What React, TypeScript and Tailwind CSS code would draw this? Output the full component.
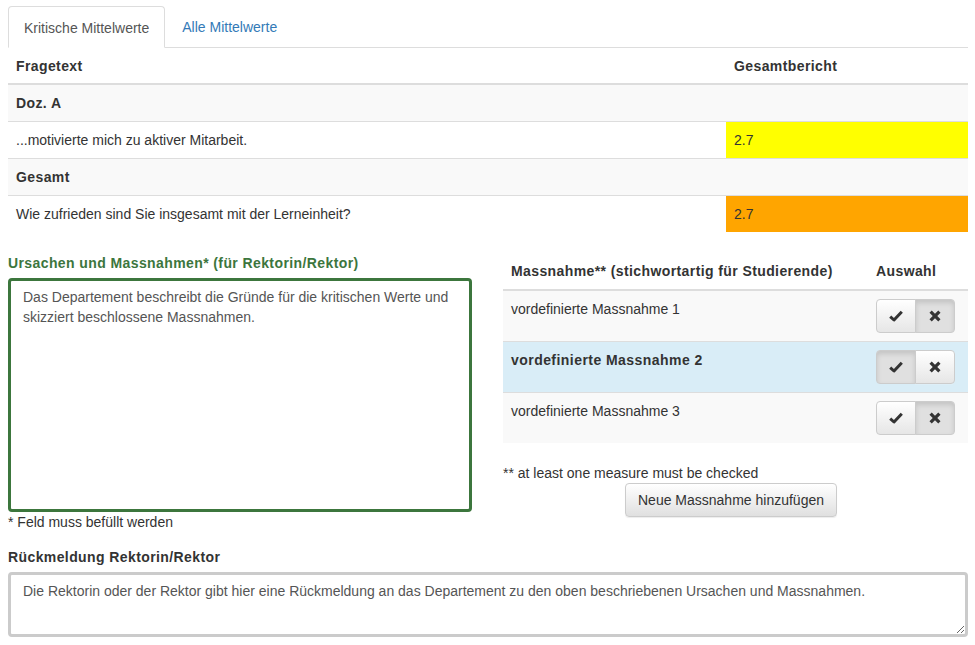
import React from 'react';

const rows = [
  { label: 'vordefinierte Massnahme 1', selected: false },
  { label: 'vordefinierte Massnahme 2', selected: true },
  { label: 'vordefinierte Massnahme 3', selected: false },
];

const CheckIcon = () => (
  <svg width="14" height="12" viewBox="0 0 14 12">
    <path d="M1.2 6.6 L5 10 L12.8 1.8" fill="none" stroke="#333" strokeWidth="3" strokeLinejoin="round" />
  </svg>
);

const RemoveIcon = () => (
  <svg width="12" height="12" viewBox="0 0 12 12">
    <path d="M1.6 1.6 L10.4 10.4 M10.4 1.6 L1.6 10.4" fill="none" stroke="#333" strokeWidth="3.2" />
  </svg>
);

const ToggleGroup: React.FC<{ on: boolean }> = ({ on }) => {
  const up = 'bg-gradient-to-b from-white to-[#e6e6e6] shadow-[0_1px_0_rgba(255,255,255,0.15)]';
  const down = 'bg-[#e0e0e0] shadow-[inset_0_3px_5px_rgba(0,0,0,0.125)]';
  return (
    <div className="flex">
      <button className={`w-[40px] h-[34px] flex items-center justify-center border border-[#ccc] rounded-l-[4px] ${on ? down : up}`}>
        <CheckIcon />
      </button>
      <button className={`w-[40px] h-[34px] -ml-px flex items-center justify-center border border-[#ccc] rounded-r-[4px] ${on ? up : down}`}>
        <RemoveIcon />
      </button>
    </div>
  );
};

export default function App() {
  return (
    <div className="min-h-screen bg-white pl-2 pr-[7px] pt-[6px] text-[14px] leading-[20px] text-[#333]" style={{ fontFamily: '"Liberation Sans", Arial, sans-serif' }}>
      {/* Tabs */}
      <div className="flex border-b border-[#ddd]">
        <div className="-mb-px px-[15px] pt-[11px] pb-[9px] bg-white border border-[#ddd] border-b-transparent rounded-t-[4px] text-[#555]">
          Kritische Mittelwerte
        </div>
        <div className="ml-[2px] px-[15px] pt-[11px] pb-[9px] text-[#337ab7]">Alle Mittelwerte</div>
      </div>

      {/* Results table */}
      <table className="w-full border-collapse mb-[21px]">
        <thead>
          <tr className="border-b-2 border-[#ddd]">
            <th className="px-2 pt-2 pb-[7px] text-left font-bold tracking-[0.4px]">Fragetext</th>
            <th className="px-2 pt-2 pb-[7px] text-left font-bold tracking-[0.4px] w-[242px]">Gesamtbericht</th>
          </tr>
        </thead>
        <tbody>
          <tr className="bg-[#f9f9f9] border-t border-[#ddd]">
            <td className="p-2 font-bold tracking-[0.4px]" colSpan={2}>Doz. A</td>
          </tr>
          <tr className="border-t border-[#ddd]">
            <td className="p-2">...motivierte mich zu aktiver Mitarbeit.</td>
            <td className="p-2 bg-[#ffff00]">2.7</td>
          </tr>
          <tr className="bg-[#f9f9f9] border-t border-[#ddd]">
            <td className="p-2 font-bold tracking-[0.4px]" colSpan={2}>Gesamt</td>
          </tr>
          <tr className="border-t border-[#ddd]">
            <td className="p-2">Wie zufrieden sind Sie insgesamt mit der Lerneinheit?</td>
            <td className="p-2 bg-[#ffa500]">2.7</td>
          </tr>
        </tbody>
      </table>

      <div className="grid grid-cols-[464px_1fr] gap-[31px]">
        {/* Left: Ursachen */}
        <div>
          <label className="block mb-[5px] font-bold tracking-[0.4px] text-[#3c763d]">Ursachen und Massnahmen* (für Rektorin/Rektor)</label>
          <textarea
            className="block w-full h-[234px] resize-none border-[3px] border-[#3c763d] rounded-[4px] px-[12px] py-[6px] text-[#555] outline-none"
            defaultValue="Das Departement beschreibt die Gründe für die kritischen Werte und skizziert beschlossene Massnahmen."
          />
          <div>* Feld muss befüllt werden</div>
        </div>

        {/* Right: Massnahmen */}
        <div>
          <table className="w-full border-collapse mb-5">
            <thead>
              <tr className="border-b-2 border-[#ddd]">
                <th className="p-2 text-left font-bold tracking-[0.4px]">Massnahme** (stichwortartig für Studierende)</th>
                <th className="p-2 text-left font-bold tracking-[0.4px] w-[100px]">Auswahl</th>
              </tr>
            </thead>
            <tbody>
              {rows.map(r => (
                <tr key={r.label} className={`border-t border-[#ddd] ${r.selected ? 'bg-[#d9edf7]' : 'bg-[#f9f9f9]'}`}>
                  <td className={`p-2 align-top ${r.selected ? 'font-bold tracking-[0.45px]' : ''}`}>{r.label}</td>
                  <td className="p-2 align-top">
                    <ToggleGroup on={r.selected} />
                  </td>
                </tr>
              ))}
            </tbody>
          </table>
          <div>** at least one measure must be checked</div>
          <div className="flex justify-center pr-[9px]">
            <button className="h-[34px] px-3 border border-[#ccc] rounded-[4px] bg-gradient-to-b from-white to-[#e0e0e0] shadow-[0_1px_1px_rgba(0,0,0,0.075)] text-[#333]">
              Neue Massnahme hinzufügen
            </button>
          </div>
        </div>
      </div>

      {/* Rückmeldung */}
      <div className="mt-[15px]">
        <label className="block mb-[5px] font-bold tracking-[0.4px]">Rückmeldung Rektorin/Rektor</label>
        <textarea
          className="block w-full h-[65px] border-[3px] border-[#cbcbcb] rounded-[4px] px-[12px] py-[6px] text-[#555] outline-none"
          defaultValue="Die Rektorin oder der Rektor gibt hier eine Rückmeldung an das Departement zu den oben beschriebenen Ursachen und Massnahmen."
        />
      </div>
    </div>
  );
}
